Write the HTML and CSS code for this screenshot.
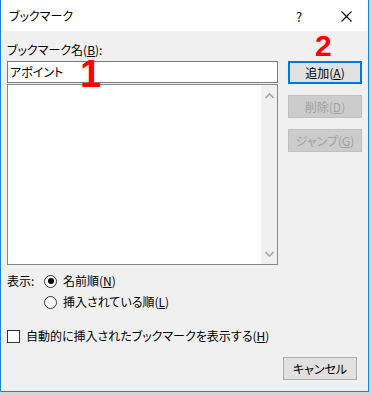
FILE: index.html
```html
<!DOCTYPE html>
<html lang="ja">
<head>
  <meta charset="UTF-8" />
  <meta name="viewport" content="width=device-width, initial-scale=1" />
  <title>ブックマーク</title>
  <link rel="stylesheet" href="styles.css">
</head>
<body>
  <div class="dialog">
    <div class="titlebar">
      <span class="title">ブックマーク</span>
      <span class="help">?</span>
      <span class="close">
        <svg width="11" height="11" viewBox="0 0 11 11"><path d="M0.5 0.5 L10.5 10.5 M10.5 0.5 L0.5 10.5" stroke="#000" stroke-width="1.1" fill="none"/></svg>
      </span>
    </div>

    <div class="content">
      <div class="main">
        <div class="left">
          <div class="field-label">ブックマーク名(<u>B</u>):</div>
          <div class="name-input">アポイント</div>
          <div class="listbox">
            <div class="list-area"></div>
            <div class="scrollbar">
              <svg width="9" height="6" viewBox="0 0 9 6"><path d="M0.5 5 L4.5 1 L8.5 5" stroke="#a6a6a6" stroke-width="1.6" fill="none"/></svg>
              <svg width="9" height="6" viewBox="0 0 9 6"><path d="M0.5 1 L4.5 5 L8.5 1" stroke="#a6a6a6" stroke-width="1.6" fill="none"/></svg>
            </div>
          </div>
        </div>
        <div class="buttons">
          <button class="btn btn-default">追加(<u>A</u>)</button>
          <button class="btn" disabled>削除(<u>D</u>)</button>
          <button class="btn" disabled>ジャンプ(<u>G</u>)</button>
        </div>
      </div>

      <div class="display-row">
        <span class="display-label">表示:</span>
        <div class="radios">
          <label class="radio"><span class="radio-dot checked"></span><span>名前順(<u>N</u>)</span></label>
          <label class="radio"><span class="radio-dot"></span><span>挿入されている順(<u>L</u>)</span></label>
        </div>
      </div>

      <label class="check-row"><span class="checkbox"></span><span>自動的に挿入されたブックマークを表示する(<u>H</u>)</span></label>

      <div class="footer">
        <button class="btn">キャンセル</button>
      </div>
    </div>

    <span class="marker marker-1">1</span>
    <span class="marker marker-2">2</span>
  </div>
</body>
</html>
```

FILE: styles.css
```css
html, body {
  margin: 0;
  padding: 0;
  background: #d4d4d4;
}
body {
  font-family: "Noto Sans CJK JP", "Noto Sans", sans-serif;
  font-size: 12px;
  font-feature-settings: "palt";
  color: #000;
}
.dialog {
  position: relative;
  width: 367px;
  height: 391px;
  background: #f0f0f0;
  border-left: 1px solid #1883d7;
  border-right: 1px solid #1883d7;
  border-bottom: 1px solid #1883d7;
}
.titlebar {
  height: 31px;
  background: #fff;
  display: flex;
  align-items: center;
  padding-left: 8px;
}
.title {
  flex: 1;
  line-height: 16px;
  margin-top: 1px;
}
.help {
  width: 12px;
  font-size: 13px;
  margin-right: 33px;
  margin-top: 1px;
}
.close {
  display: flex;
  margin-right: 16px;
  margin-top: 1px;
}
.content {
  padding: 11px 6px 0 6px;
}
.main {
  display: flex;
  gap: 10px;
}
.left {
  width: 271px;
}
.field-label {
  line-height: 16px;
  height: 16px;
  margin-bottom: 3px;
}
.name-input {
  height: 20px;
  line-height: 20px;
  border: 1px solid #7a7a7a;
  background: #fff;
  padding-left: 2px;
}
.listbox {
  margin-top: 1px;
  height: 179px;
  border: 1px solid #828790;
  background: #fff;
  display: flex;
}
.list-area {
  flex: 1;
}
.scrollbar {
  width: 16px;
  background: #f0f0f0;
  display: flex;
  flex-direction: column;
  justify-content: space-between;
  align-items: center;
  padding: 8px 0 7px;
}
.buttons {
  margin-top: 19px;
  display: flex;
  flex-direction: column;
  gap: 11px;
}
.btn {
  width: 74px;
  height: 23px;
  padding: 0;
  font-family: inherit;
  font-size: 12px;
  font-feature-settings: "palt";
  background: #e1e1e1;
  border: 1px solid #adadad;
  color: #000;
}
.btn-default {
  border: 2px solid #0078d7;
}
.btn:disabled {
  background: #cccccc;
  border-color: #bfbfbf;
  color: #a0a0a0;
}
.display-row {
  margin-top: 8px;
  display: flex;
}
.display-label {
  width: 37px;
  line-height: 16px;
}
.radios {
  display: flex;
  flex-direction: column;
  gap: 5px;
}
.radio {
  display: flex;
  align-items: center;
  line-height: 16px;
  gap: 6px;
}
.radio-dot {
  width: 11px;
  height: 11px;
  border: 1px solid #333;
  border-radius: 50%;
  background: #fff;
  position: relative;
}
.radio-dot.checked::after {
  content: "";
  position: absolute;
  left: 2.5px;
  top: 2.5px;
  width: 6px;
  height: 6px;
  border-radius: 50%;
  background: #000;
}
.check-row {
  margin-top: 18px;
  display: flex;
  align-items: center;
  gap: 6px;
  line-height: 16px;
}
.checkbox {
  width: 11px;
  height: 11px;
  border: 1px solid #333;
  background: #fff;
}
.footer {
  margin-top: 13px;
  display: flex;
  justify-content: flex-end;
  padding-right: 5px;
}
.marker {
  position: absolute;
  color: #ff0000;
  font-family: "Liberation Sans", sans-serif;
  font-weight: bold;
}
.marker-1 {
  left: 79px;
  top: 60px;
  font-size: 38px;
  line-height: 28px;
}
.marker-2 {
  left: 314px;
  top: 35px;
  font-size: 30px;
  line-height: 22px;
}
```
